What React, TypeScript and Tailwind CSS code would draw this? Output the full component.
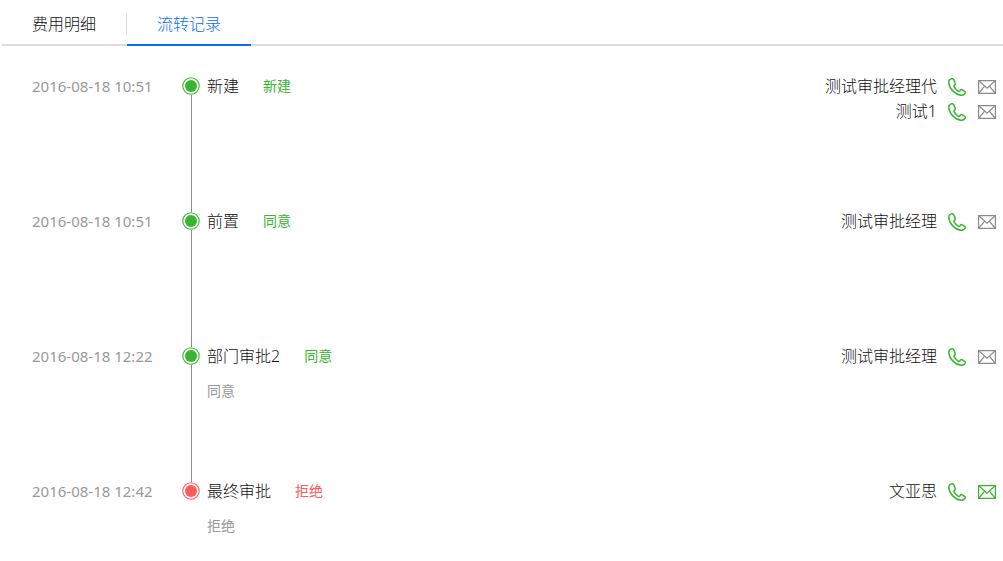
import { useState } from 'react'
import clsx from 'clsx'

interface Person {
  name: string
  mailed?: boolean
}

interface FlowStep {
  time: string
  title: string
  status: string
  rejected?: boolean
  comment?: string
  people: Person[]
}

const TABS = ['费用明细', '流转记录']

const STEPS: FlowStep[] = [
  {
    time: '2016-08-18 10:51',
    title: '新建',
    status: '新建',
    people: [{ name: '测试审批经理代' }, { name: '测试1' }],
  },
  {
    time: '2016-08-18 10:51',
    title: '前置',
    status: '同意',
    people: [{ name: '测试审批经理' }],
  },
  {
    time: '2016-08-18 12:22',
    title: '部门审批2',
    status: '同意',
    comment: '同意',
    people: [{ name: '测试审批经理' }],
  },
  {
    time: '2016-08-18 12:42',
    title: '最终审批',
    status: '拒绝',
    rejected: true,
    comment: '拒绝',
    people: [{ name: '文亚思', mailed: true }],
  },
]

function PhoneIcon() {
  return (
    <svg width="18" height="18" viewBox="0 0 18 18" fill="none" stroke="currentColor" strokeWidth="1.5" strokeLinejoin="round">
      <path d="M3.200.9C1.600 1.500.6 3 .8 4.900c.3 2.900 1.900 5.900 4.200 8.200 2.300 2.400 5.300 4 8.200 4.200 1.800.1 3.200-.8 3.900-2.200.3-.7.1-1.300-.5-1.700l-2.200-1.500c-.7-.5-1.500-.3-2 .3l-.6.9c-.3.4-.7.5-1.200.2-1.900-1-3.500-2.700-4.500-4.500-.3-.5-.2-.9.200-1.200.8-.6 1.100-1.500.8-2.500L6 2.300C5.500 1 4.500.4 3.200.9Z" />
    </svg>
  )
}

function MailIcon() {
  return (
    <svg width="18" height="14" viewBox="0 0 18 14" fill="none" stroke="currentColor" strokeWidth="1.2">
      <path d="M.6.6h16.800v12.800H.6Z" />
      <path d="M.8.8 9 8.200 17.200.8M1 13l5.600-6.800M17 13l-5.600-6.800" />
    </svg>
  )
}

function Marker({ rejected }: { rejected?: boolean }) {
  return (
    <svg
      className={clsx('block shrink-0', rejected ? 'text-[#ff5b5b]' : 'text-[#38b62f]')}
      width="18"
      height="18"
      viewBox="0 0 18 18"
    >
      <circle cx="9" cy="9" r="8.200" fill="none" stroke="currentColor" strokeWidth="1.100" />
      <circle cx="9" cy="9" r="6" fill="currentColor" />
    </svg>
  )
}

function PersonRow({ name, mailed }: Person) {
  return (
    <li className="flex h-[25px] items-center justify-end pb-[2px]">
      <span>{name}</span>
      <button type="button" aria-label={`致电${name}`} className="ml-[11px] mt-[2px] text-[#38b62f]">
        <PhoneIcon />
      </button>
      <button
        type="button"
        aria-label={`发邮件给${name}`}
        className={clsx('ml-3 mt-[2px]', mailed ? 'text-[#38b62f]' : 'text-[#8c8c8c]')}
      >
        <MailIcon />
      </button>
    </li>
  )
}

function StepRow({ step, first, last }: { step: FlowStep; first: boolean; last: boolean }) {
  return (
    <li className={clsx('flex', last ? 'min-h-[69px]' : 'min-h-[135px]')}>
      <time className="w-[150px] shrink-0 text-[15px] leading-[25px] font-normal text-[#999]">{step.time}</time>
      <div className="flex w-[18px] shrink-0 flex-col">
        <div className={clsx('ml-[9px] h-[3px] w-px', !first && 'bg-[#8c8c8c]')} />
        <Marker rejected={step.rejected} />
        {!last && <div className="ml-[9px] w-px flex-1 bg-[#8c8c8c]" />}
      </div>
      <div className="ml-[7px] min-w-0 flex-1">
        <div className="flex h-[25px] items-center gap-6 pb-[2px]">
          <span>{step.title}</span>
          <span className={clsx('text-sm font-normal', step.rejected ? 'text-[#ff5b5b]' : 'text-[#38b62f]')}>
            {step.status}
          </span>
        </div>
        {step.comment && <p className="mt-3 text-sm font-normal text-[#999]">{step.comment}</p>}
      </div>
      <ul>
        {step.people.map((person) => (
          <PersonRow key={person.name} {...person} />
        ))}
      </ul>
    </li>
  )
}

export default function App() {
  const [active, setActive] = useState(1)

  return (
    <div className="min-h-screen bg-white font-['Noto_Sans','Noto_Sans_CJK_SC',sans-serif] text-base font-light text-[#111]">
      <nav className="ml-[2px] flex h-[46px] border-b-2 border-[#dcdcdc]">
        {TABS.map((tab, i) => (
          <div key={tab} className="flex items-center">
            {i > 0 && <span className="mt-1 h-5 w-px bg-[#dcdcdc]" />}
            <button
              type="button"
              onClick={() => setActive(i)}
              className={clsx(
                '-mb-[2px] h-[46px] border-b-2 px-[30px] pt-1',
                active === i ? 'border-[#0a6cf0] text-[#0a6cf0]' : 'border-transparent',
              )}
            >
              {tab}
            </button>
          </div>
        ))}
      </nav>
      <ol className="pt-7 pr-[7px] pl-8">
        {STEPS.map((step, i) => (
          <StepRow key={step.title} step={step} first={i === 0} last={i === STEPS.length - 1} />
        ))}
      </ol>
    </div>
  )
}
